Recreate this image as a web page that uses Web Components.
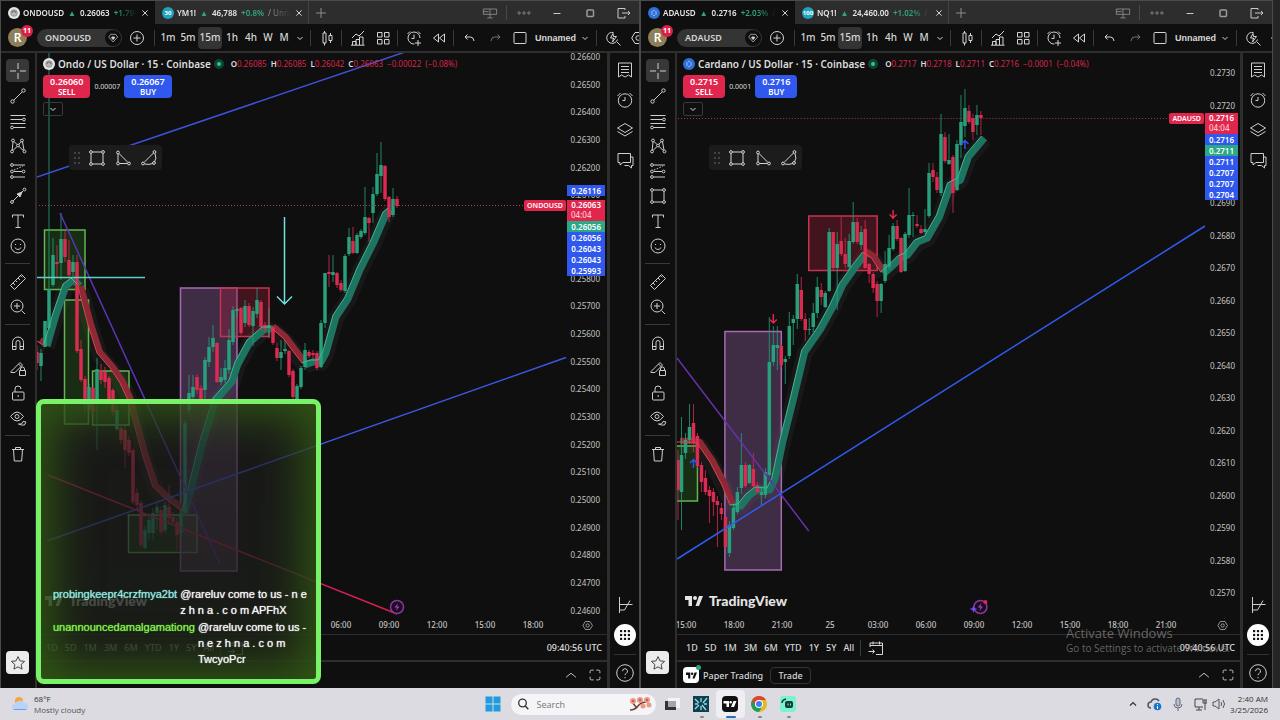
<!DOCTYPE html>
<html lang="en">
<head>
<meta charset="utf-8">
<title>Trading desktop</title>
<style>
  html, body { margin: 0; height: 100%; }
  body { background: #222; overflow: hidden; font-family: "Noto Sans", "Open Sans", sans-serif; }
</style>
</head>
<body>
<trading-desktop></trading-desktop>

<script>
const RESET = `
  *, *::before, *::after { box-sizing: border-box; }
  button, input { font: inherit; color: inherit; background: none; border: 0; padding: 0; margin: 0; }
  button { display: inline-flex; align-items: center; justify-content: center; white-space: nowrap; cursor: pointer; }
`;

/* Line icons, drawn on an 18 x 18 grid */
const dot = (x, y, r = 1.4) => `<circle cx="${x}" cy="${y}" r="${r}"/>`;
const ICONS = {
  cross: '<path d="M9 1v6M9 11v6M1 9h6M11 9h6"/>',
  line: `${dot(3.5, 14.5, 1.7)}${dot(14.5, 3.5, 1.7)}<path d="M4.8 13.2 13.2 4.8"/>`,
  fib: `<path d="M1.500 3.500h15M1.500 7.500h12M1.500 11.500h15M4.500 15.500h12"/>${dot(15, 7.5)}${dot(3, 15.5)}`,
  pattern: `${dot(4, 3.5)}${dot(13, 3.5)}${dot(3, 14.5)}${dot(15.500, 14.500)}${dot(9, 8.5)}<path d="M4 5 3.200 13M5 4.500 8 7.500M12 4.500 10 7.500M13.500 5 15 13M4 13.500 8 9.500M10 9.500 14.500 13.500"/>`,
  forecast: `${dot(3, 3)}${dot(3, 9.500)}${dot(14.500, 9.500)}${dot(3, 15)}<path d="M5 3h11M5 9.500h8M5 15h11"/><path d="M5 8 14 4" stroke-dasharray="1.500 1.500"/>`,
  arrow: `${dot(3, 15)}${dot(15.500, 2.500)}<path d="M4 14 14 4"/><path d="M13 5 11 10 8 7z" fill="currentColor"/>`,
  rect: `${dot(3, 3)}${dot(15, 3)}${dot(3, 15)}${dot(15, 15)}<path d="M4.500 3h9M4.500 15h9M3 4.500v9M15 4.500v9"/>`,
  text: '<path d="M3.500 5.500v-2.500h11v2.500M9 3v12.500M6.500 15.500h5"/>',
  smile: '<circle cx="9" cy="9" r="7"/><path d="M5.800 10.500q3.200 4 6.400 0M6.500 7v1M11.500 7v1"/>',
  ruler: '<path d="M1.500 12.500 12.500 1.500 16.500 5.500 5.500 16.500zM4 10l2 2M6.500 7.500l1.500 1.500M9 5l2 2M11.500 2.800 13 4.300"/>',
  zoom: '<circle cx="8" cy="8" r="6"/><path d="M8 5v6M5 8h6M12.500 12.500 16 16"/>',
  magnet: '<path d="M3.500 15.500V8.500a5.500 5.500 0 0 1 11 0v7h-3.500v-7a2 2 0 0 0-4 0v7zM3.500 12.500h3.500M11 12.500h3.500"/>',
  penlock: '<path d="M2 12.500 11 3.500l2.500 2.500-7.500 7.500H2zM9.500 5l2.500 2.500"/><rect x="10.500" y="11.500" width="6" height="5"/><path d="M11.500 11.500v-1.500a2 2 0 0 1 4 0v1.500"/>',
  lock: '<rect x="3.500" y="8" width="11.500" height="8" rx="1"/><path d="M6 8V5a3 3 0 0 1 6 0M9.200 11v2"/>',
  eye: '<path d="M1.500 7.500q6.500-9 13 0-6.500 9-13 0z"/><circle cx="8" cy="7.500" r="2"/><path d="M9.500 15h3l1.500-2.500 3 .5-1.500 3h-3z"/>',
  trash: '<path d="M3 4.500h12M6.500 4.500V2.500h5v2M4.500 4.500l.8 11.500h7.400l.8-11.500"/>',
  star: '<path d="M9 1.800l2.200 4.800 5.200.6-3.900 3.500 1.100 5.200L9 13.300l-4.600 2.600 1.100-5.200L1.600 7.200l5.200-.6z"/>',
  plus: '<circle cx="9" cy="9" r="6.500"/><path d="M9 5.500v7M5.500 9h7"/>',
  add: '<path d="M9 4v10M4 9h10"/>',
  close: '<path d="M6 6l6 6M12 6l-6 6"/>',
  chevron: '<path d="M6.500 8 9 10.500 11.500 8"/>',
  up: '<path d="M3.500 11.500 9 7l5.500 4.500"/>',
  candles: '<path d="M5 4v10h3V4zM6.500 2v2M6.500 14v2.500M11 6.500v5h3v-5zM12.500 4v2.500M12.500 11.500v2.500"/>',
  indicators: '<path d="M3 9 7 5l3 2 5-5M3.500 16v-3.500h3.500V16M7 16v-5.500h3.500V16M10.500 16V8h3.500v8M2 16.200h13.500"/>',
  grid: '<rect x="3.500" y="3.500" width="4.500" height="4.500"/><rect x="10.500" y="3.500" width="4.500" height="4.500"/><rect x="3.500" y="10.500" width="4.500" height="4.500"/><rect x="10.500" y="10.500" width="4.500" height="4.500"/>',
  alarmadd: '<path d="M15 9a6 6 0 1 0-5.500 6M9 5.500V9.500H6.500M2.500 5 5 2.500M13 2.500 15.500 5M13 11v6M10 14h6"/>',
  rewind: '<path d="M8.500 5 3.500 9l5 4zM14.500 5l-5 4 5 4z"/>',
  undo: '<path d="M6.500 5.500 4 8l2.500 2.500M4.500 8h5q3 0 3.500 4"/>',
  redo: '<path d="M11.500 5.500 14 8l-2.500 2.500M13.500 8h-5q-3 0-3.500 4" stroke-opacity=".5"/>',
  layout: '<rect x="3" y="3.500" width="12" height="11" rx="1"/>',
  search: '<path d="M13.500 10.500a5.500 5.500 0 1 1-4-7M13 13l3.500 3.500"/><path d="M9 4.500 6.500 9h3L8.500 13 12.500 7.500h-3z"/>',
  hex: '<path d="M6 3.500h6.500L15.800 9l-3.300 5.500H6L2.700 9z"/><circle cx="9.200" cy="9" r="2.300"/>',
  heart: '<path d="M5.500 3.500h7.500l3 4L9.200 15 2.500 7.500z"/><path d="M9.200 11.500 6.800 8.800q0-2.300 2.400-1.200 2.400-1.100 2.400 1.200z" fill="currentColor"/>',
  panes: '<rect x="1.500" y="4.500" width="15" height="6"/><path d="M9 4.500v10M6 14.500h6M1.500 7.500h6"/>',
  more: '<circle cx="3.500" cy="9" r="1.300"/><circle cx="9" cy="9" r="1.300"/><circle cx="14.500" cy="9" r="1.300"/>',
  min: '<path d="M5.500 9.500h7"/>',
  max: '<rect x="6" y="6" width="6.500" height="6.500" rx="1" stroke-width="1.500" stroke-opacity=".7"/>',
  exit: '<path d="M11 6V4.500H4v9.500H11V12M8 9h8M14 7 16 9 14 11"/>',
  news: '<path d="M2.500 2h13v14l-3-2-3.500 2-3.500-2-3 2zM5 5.500h8M5 8.500h8M5 11.500h8"/>',
  alarm: '<circle cx="9" cy="9.500" r="6.700"/><path d="M9 6v3.500H6.500M1.500 5l3-3M16.500 5l-3-3"/>',
  layers: '<path d="M9 2.500 16.500 7 9 11.500 1.500 7zM1.500 10.500 9 15l7.500-4.500"/>',
  chat: '<path d="M2 2.500h12.500v9H7L4 14v-2.500H2zM14.500 6H17v8.500h-1.500V17l-3-2.500H8.500"/>',
  tree: '<path d="M3.500 1v16M3.500 8.500h13M3.500 14h5L14 4.500"/>',
  dots9: [4, 9, 14].flatMap(y => [4, 9, 14].map(x => `<rect x="${x - 1.4}" y="${y - 1.4}" width="2.800" height="2.800" fill="currentColor" stroke="none"/>`)).join(''),
  help: '<circle cx="9" cy="9" r="8.300"/><path d="M6.500 7.200a2.500 2.500 0 1 1 3.700 2.200q-1.200.6-1.200 1.800M9 13v1.200"/>',
  calendar: '<path d="M3 8V4h12.500v11.500H9M3 6.500h12.500M6 2.500v3M12.500 2.500v3M1.500 12.500h6M5.500 10.500l2 2-2 2"/>',
  full: '<path d="M3.500 7V5q0-1.500 1.500-1.500h2.500M10.500 3.500H13q1.500 0 1.500 1.500v2M14.500 11v2q0 1.500-1.500 1.500h-2.500M7.500 14.500H5q-1.500 0-1.500-1.500v-2"/>',
  grip: [4, 9, 14].flatMap(y => [7, 11].map(x => `<circle cx="${x}" cy="${y}" r=".9" fill="currentColor" stroke="none"/>`)).join(''),
  angle: `${dot(4, 3.500)}${dot(4, 14.500)}${dot(15, 14.500)}<path d="M4 5v8M5.500 14.500h8M5 4.500 14 13.500"/>`,
  arc: `${dot(14.500, 3)}${dot(3, 14.500)}${dot(14, 14)}<path d="M13.500 4 4 13.500M4.500 15q4.500 1 8.500-.5M15 4.500q2 5-.5 8.500"/>`,
  tv: '<g fill="currentColor" stroke="none"><path d="M0 4h7v10H3.500V8H0z"/><circle cx="10" cy="6" r="2"/><path d="M10.500 14 14 4h4l-4 10z"/></g>'
};

class UiIcon extends HTMLElement {
  connectedCallback() {
    const name = this.getAttribute('name');
    this.attachShadow({ mode: 'open' }).innerHTML = `
      <style>
        :host { display: inline-block; flex: none; width: var(--icon, 18px); height: var(--icon, 18px); }
        svg { display: block; width: 100%; height: 100%; overflow: visible; fill: none; stroke: currentColor; stroke-width: 1; stroke-linejoin: round; }
      </style>
      <svg viewBox="0 0 18 18" aria-hidden="true">${ICONS[name] || ''}</svg>`;
  }
}
customElements.define('ui-icon', UiIcon);

/* Coin or index badge shown beside a symbol */
class CoinLogo extends HTMLElement {
  connectedCallback() {
    const kind = this.getAttribute('kind');
    const art = {
      ondo: '<circle cx="6" cy="6" r="6" fill="#e6e6e6"/><circle cx="6" cy="6" r="3.300" fill="#b5b5b5" stroke="#8a8a8a" stroke-width=".8"/><path d="M4 6a2 2 0 0 1 4 0" fill="none" stroke="#666"/>',
      ada: '<circle cx="6" cy="6" r="6" fill="#2f6fd6"/><g fill="#a9c8ff"><circle cx="6" cy="3.500" r=".8"/><circle cx="6" cy="8.500" r=".8"/><circle cx="4" cy="5" r=".8"/><circle cx="8" cy="5" r=".8"/><circle cx="4" cy="7" r=".8"/><circle cx="8" cy="7" r=".8"/></g>'
    }[kind] || '<circle cx="6" cy="6" r="6" fill="#1fa3bd"/>';
    this.attachShadow({ mode: 'open' }).innerHTML = `
      <style>
        :host { display: inline-grid; flex: none; width: 12px; height: 12px; place-items: center; color: #fff; font-size: 6px; line-height: 6px; font-weight: 700; }
        svg { grid-area: 1 / 1; width: 12px; height: 12px; display: block; }
        span { grid-area: 1 / 1; }
      </style>
      <svg viewBox="0 0 12 12" aria-hidden="true">${art}</svg><span><slot></slot></span>`;
  }
}
customElements.define('coin-logo', CoinLogo);

/* Each candle: x, colour, body top, body bottom, wick top, wick bottom */
const CHARTS = {
  ondo: {
    box: '37 53 530 563',
    candles: `37r 352 363 345 370;41g 353 366 349 381;45g 321 347 321 347;49g 289 328 53 330;53g 255 285 238 287;57r 262 264 245 277;61g 239 263 213 280;65r 239 257 230 262;69r 260 275 240 277;73g 262 272 255 276;77r 262 351 255 353;81r 349 380 340 382;85r 379 405 376 412;89g 387 410 384 414;93r 388 412 386 420;97g 369 402 358 450;101r 370 380 364 384;105r 372 382 367 388;109r 378 402 376 404;113r 390 412 388 416;117g 410 429 400 431;121r 428 440 424 444;125r 430 450 426 468;129r 440 453 436 456;133r 450 502 448 504;137r 493 505 488 510;141r 503 545 500 548;145g 530 548 526 550;149g 520 533 514 540;153g 513 533 508 540;157g 507 513 502 530;161r 510 532 506 535;165g 505 530 502 533;169r 507 518 485 524;173r 517 522 512 526;177r 522 535 518 550;181g 513 533 510 536;185g 423 513 420 514;189g 393 410 375 414;193g 387 397 375 400;197r 377 390 374 394;201r 388 402 385 404;205g 360 390 357 402;209g 347 362 337 367;213g 338 347 325 352;217r 343 382 342 383;221g 377 382 368 385;225g 368 380 360 383;229g 340 370 329 374;233g 310 342 306 345;237g 309 311 307 318;241r 308 333 307 335;245g 306 323 300 327;249r 306 325 303 327;253g 311 326 307 346;257g 300 314 288 318;261r 302 327 300 330;265r 325 329 322 332;269g 325 328 308 338;273r 327 343 326 345;277r 348 358 343 361;281g 352 358 340 370;285g 349 351 340 354;289r 351 375 350 377;293r 371 397 369 402;297g 386 400 384 404;301g 368 387 366 389;305g 350 367 343 370;309r 352 356 350 358;313r 353 355 350 360;317r 353 368 351 370;321g 323 367 320 368;325g 273 323 273 328;329r 272 274 255 287;333g 272 275 255 282;337r 273 285 272 288;341r 283 290 280 292;345g 256 291 254 293;349g 237 254 228 256;353r 241 253 227 254;357g 235 253 233 254;361g 231 237 229 239;365g 217 233 187 235;369r 218 223 217 242;373g 194 213 187 223;377g 174 194 153 196;381g 165 176 142 193;385r 166 199 165 201;389r 197 217 196 222;393g 199 215 188 217;397r 199 206 196 208`,
    ribbons: [
      ['r', '37,341 43,345'],
      ['g', '44,344 53,313 63,284 71,278 77,284'],
      ['r', '78,287 88,325 97,353 110,368 120,383 127,398 133,420 143,457 153,487 167,500 182,511'],
      ['g', '182,511 190,480 200,440 213,398 229,380 235,362 247,340 262,327 270,327'],
      ['r', '270,327 283,338 292,350 302,363'],
      ['g', '302,363 310,360 318,360 323,351 333,315 345,297 357,268 370,242 383,212 388,208']
    ],
    boxes: [
      [44.5, 230, 40.5, 59.5, 'lime'], [64.5, 300, 24, 124, 'lime'], [92.5, 371, 36.5, 54, 'lime'], [128.5, 515, 68.5, 37.5, 'lime'],
      [180.5, 288, 56.5, 283, 'violet'], [220.5, 288, 48.5, 48.5, 'rose']
    ],
    lines: [
      [37, 177, 405, 52, '#3f51d8'], [47, 541, 566, 357.5, '#3b56e0'], [48, 475, 397, 614, '#d32150'],
      [60, 213, 220, 564, '#5a35b8'], [37, 277.5, 145, 277.5, '#62cfc4']
    ],
    extra: '<path d="M284.5 217v87M277 296.500l7.500 7.500 7.500-7.500" stroke="#6fe0dc" stroke-width="1.500" fill="none"/>',
    last: 205.5, event: [397, 607]
  },
  ada: {
    box: '677 53 529 563',
    candles: `678r 460 490 450 520;681.5g 455 492 417 530;685.5g 440 453 433 459;689.5g 427 440 404 444;693.5r 423 442 404 452;697.5r 436 466 433 468;701.5r 465 482 462 492;705.5r 478 492 470 495;709.5r 490 496 486 523;713.5r 492 502 488 516;717.5r 501 505 496 547;721.5r 508 514 503 520;725.5r 517 547 515 549;729.5g 525 553 521 557;733.5g 508 528 505 530;737.5g 492 512 487 514;741.5g 465 488 433 494;745.5r 465 486 462 488;749.5g 465 483 464 484;753.5r 469 486 453 489;757.5r 485 492 482 494;761.5g 492 495 488 505;765.5g 472 495 468 498;769.5g 362 475 317 477;773.5g 345 362 326 366;777.5g 345 348 326 370;781.5r 346 365 344 368;785.5g 359 362 356 384;789.5g 326 356 312 359;793.5g 319 323 315 345;797.5g 284 319 274 329;801.5r 290 319 277 321;805.5r 319 330 313 341;809.5g 329 330 318 335;813.5g 313 327 303 332;817.5g 287 313 277 318;821.5r 290 297 283 305;825.5g 293 307 291 308;829.5g 232 291 228 292;833.5r 232 268 232 270;837.5g 244 268 232 310;841.5r 241 254 217 256;845.5r 254 264 238 268;849.5g 241 267 234 271;853.5g 222 242 202 244;857.5r 222 242 218 244;861.5g 232 245 226 250;865.5r 229 268 220 269;869.5r 264 274 263 283;873.5r 274 288 272 293;877.5r 284 301 281 317;881.5g 284 301 283 313;885.5g 264 281 251 283;889.5g 248 267 235 270;893.5g 226 249 223 251;897.5r 226 239 220 241;901.5r 238 272 237 273;905.5g 234 271 232 272;909.5g 215 235 188 238;913.5g 215 216 212 237;917.5r 224 226 215 228;921.5r 229 233 225 234;925.5g 229 232 209 234;929.5g 173 216 163 218;933.5r 170 177 163 182;937.5r 177 190 172 193;941.5g 134 193 114 196;945.5r 137 161 132 163;949.5g 160 164 134 165;953.5r 157 193 155 213;957.5g 144 190 140 191;961.5g 122 145 95 158;965.5g 108 126 89 137;969.5r 111 122 105 124;973.5r 118 132 114 140;977.5g 115 125 105 135;981.5r 115 118 111 135`,
    ribbons: [
      ['r', '677,442 690,442 697,443 710,462 722,485 730,505'],
      ['g', '730,505 738,504 746,494 755,487 767,488 772,478 780,440 790,400 802,350 818,327 830,305 840,283 855,262 863,252'],
      ['r', '863,252 872,258 881,272'],
      ['g', '881,272 892,262 898,256 905,253 915,240 925,236 937,215 948,183 958,178 966,155 982,136']
    ],
    boxes: [[660, 446, 37.5, 55, 'lime'], [725, 331.5, 56.5, 238.5, 'violet'], [809, 216, 68.5, 54.5, 'rose']],
    lines: [[677, 358, 809, 531, '#6a2fb0'], [677, 559, 1206, 226, '#2f5cf0']],
    extra: `<g fill="none" stroke-width="1.500"><path d="M773.500 314v9M770 319.500l3.500 3.500 3.500-3.500M893.500 210v9M890 214.500l3.500 3.500 3.500-3.500" stroke="#e0264d"/><path d="M965.500 149v-8M962 144l3.500-3.500 3.500 3.500M693.500 468v-8M690 463l3.500-3.500 3.500 3.500" stroke="#2f55f0"/></g>`,
    last: 118.5, event: [981, 607]
  }
};

class PricePlot extends HTMLElement {
  connectedCallback() {
    const key = this.getAttribute('series');
    const c = CHARTS[key];
    const candles = c.candles.split(';').map(s => {
      const [id, bt, bb, wt, wb] = s.trim().split(' ');
      const x = parseFloat(id), col = id.endsWith('g') ? '#26a17b' : '#dc2a50';
      return `<path d="M${x} ${wt}V${wb}" stroke="${col}" stroke-opacity=".8"/><rect x="${x - 1.75}" y="${bt}" width="3.500" height="${Math.max(1, bb - bt)}" fill="${col}"/>`;
    }).join('');
    const haze = c.ribbons.map(([, p]) => `<polyline points="${p}" stroke="#191818" stroke-width="16" transform="translate(3 3)"/>`).join('');
    const band = c.ribbons.map(([k, p]) => k === 'g'
      ? `<polyline points="${p}" stroke="#1d7460" stroke-width="7" transform="translate(3 2)"/>`
      : `<polyline points="${p}" stroke="#8e2835" stroke-width="6" transform="translate(3 -1)"/>`).join('');
    const edge = c.ribbons.map(([k, p]) => `<polyline points="${p}" stroke="${k === 'g' ? '#45b795' : '#d2484f'}"/>`).join('');
    const tint = { lime: ['#63b552', '#2a6a1e55'], violet: ['#a868b4', '#7a508873'], rose: ['#c8334f', '#a0203c59'] };
    const boxes = c.boxes.map(([x, y, w, h, t]) => `<rect x="${x}" y="${y}" width="${w}" height="${h}" stroke="${tint[t][0]}" stroke-width="1.500" fill="${tint[t][1]}"/>`).join('');
    const lines = c.lines.map(([x1, y1, x2, y2, s]) => `<path d="M${x1} ${y1}L${x2} ${y2}" stroke="${s}" stroke-width="1.500"/>`).join('');
    const [ex, ey] = c.event;
    const spark = key === 'ada' ? `<path d="M${ex - 7} ${ey - 2}l1 3 3 1-3 1-1 3-1-3-3-1 3-1z" fill="#6d4df0"/><circle cx="${ex + 5}" cy="${ey - 5}" r="2" fill="#e0264d"/>` : '';
    this.attachShadow({ mode: 'open' }).innerHTML = `
      <style>:host { display: block; min-width: 0; } svg { display: block; width: 100%; height: 100%; }</style>
      <svg viewBox="${c.box}" preserveAspectRatio="none" role="img" aria-label="Price chart">
        <g fill="none" stroke-linejoin="round">${haze}</g>
        ${boxes}
        <g fill="none" stroke-linejoin="round">${band}</g>
        ${candles}
        <g fill="none" stroke-linejoin="round">${edge}</g>
        ${lines}${c.extra}
        <path d="M0 ${c.last}H1300" stroke="#a83a52" stroke-dasharray="1 2"/>
        <circle cx="${ex}" cy="${ey}" r="6.500" fill="#1a0d20" stroke="#8a35a0" stroke-width="1.500"/>
        <path d="M${ex + 1} ${ey - 4}l-3.500 4.500h2.500l-1 3.500 3.500-4.500h-2.500z" fill="#a544bb"/>${spark}
      </svg>`;
  }
}
customElements.define('price-plot', PricePlot);

/* Price scale with evenly spaced labels and the stack of current values */
class PriceScale extends HTMLElement {
  set data(d) {
    this.attachShadow({ mode: 'open' }).innerHTML = `
      <style>${RESET}
        :host { display: flex; flex: none; position: relative; width: var(--scale); font-size: 8px; line-height: 11px; color: #c4c4c4; }
        ol { flex: 1; list-style: none; margin: var(--start) 0 var(--end) 0; padding: 0 var(--inset) 0 0; display: flex; flex-direction: column; justify-content: space-between; align-items: flex-end; }
        li { height: 11px; }
        .tags { position: absolute; left: 0; right: 2px; top: var(--tag-top); color: #fff; font-weight: 600; }
        .tags div, .alone { padding-right: 4px; text-align: right; background: #3058ee; height: 11px; }
        .tags .last { background: #e0264d; height: 21px; line-height: 10px; }
        .tags .last span { display: block; text-align: left; padding-left: 4px; font-weight: 500; color: #ffc9d2; }
        .tags .mint { background: #2ba886; }
        .alone { position: absolute; left: 0; right: 2px; top: 132px; color: #fff; font-weight: 600; }
        .name { position: absolute; right: 100%; top: var(--tag-top); margin-right: 1px; padding: 0 3px; background: #e0264d; color: #fff; font-size: 7px; font-weight: 600; border-radius: 2px; }
      </style>
      <ol>${d.labels.map(l => `<li>${l}</li>`).join('')}</ol>
      ${d.alone ? `<div class="alone">${d.alone}</div>` : ''}
      <span class="name">${d.symbol}</span>
      <div class="tags"><div class="last">${d.price}<span>04:04</span></div>${d.tags.map((t, i) => `<div class="${i === d.mint ? 'mint' : ''}">${t}</div>`).join('')}</div>`;
  }
}
customElements.define('price-scale', PriceScale);

class ToolRail extends HTMLElement {
  connectedCallback() {
    const sixth = this.getAttribute('sixth');
    const groups = [['cross', 'line', 'fib', 'pattern', 'forecast', sixth, 'text', 'smile'], ['ruler', 'zoom'], ['magnet', 'penlock', 'lock', 'eye'], ['trash']];
    this.attachShadow({ mode: 'open' }).innerHTML = `
      <style>${RESET}
        :host { display: flex; flex-direction: column; align-items: center; padding: 5px 1px 14px 0; color: #cfcfcf; }
        button { width: 23px; height: 25px; }
        .on { background: #383838; border-radius: 4px; height: 23px; margin: 1px 0; }
        hr { width: 25px; height: 1px; border: 0; background: #3a3a3a; margin: 5px 0; }
        .fav { margin-top: auto; height: 23px; background: #ececec; color: #333; border-radius: 4px; --icon: 16px; }
      </style>
      ${groups.map(g => g.map(n => `<button class="${n === 'cross' ? 'on' : ''}" aria-label="${n}"><ui-icon name="${n}"></ui-icon></button>`).join('')).join('<hr>')}
      <button class="fav" aria-label="Favourites"><ui-icon name="star"></ui-icon></button>`;
  }
}
customElements.define('tool-rail', ToolRail);

class WidgetRail extends HTMLElement {
  connectedCallback() {
    this.attachShadow({ mode: 'open' }).innerHTML = `
      <style>${RESET}
        :host { display: flex; flex-direction: column; align-items: center; padding: 2px 0 0; color: #cfcfcf; }
        button { width: 28px; height: 30px; }
        .gap { flex: 1; }
        .apps { width: 22px; height: 22px; margin: 4px 0; border-radius: 50%; background: #fff; color: #111; --icon: 14px; }
        hr { width: 22px; height: 1px; border: 0; background: #333; margin: 4px 0 3px; }
      </style>
      ${['news', 'alarm', 'layers', 'chat'].map(n => `<button aria-label="${n}"><ui-icon name="${n}"></ui-icon></button>`).join('')}
      <span class="gap"></span>
      <button aria-label="Object tree"><ui-icon name="tree"></ui-icon></button>
      <button class="apps" aria-label="Apps"><ui-icon name="dots9"></ui-icon></button>
      <hr>
      <button aria-label="Help"><ui-icon name="help"></ui-icon></button>`;
  }
}
customElements.define('widget-rail', WidgetRail);

class TabStrip extends HTMLElement {
  set data(tabs) {
    this.attachShadow({ mode: 'open' }).innerHTML = `
      <style>${RESET}
        :host { display: flex; flex: none; height: 23px; background: #2d2d2d; color: #e6e6e6; font-size: 8px; line-height: 12px; font-weight: 600; }
        .tab { width: 154px; display: flex; align-items: center; padding: 0 1px 0 7px; border-right: 1px solid #444; flex: none; }
        .tab.on { background: #0f0f0f; border-color: #0f0f0f; }
        .copy { flex: 1; min-width: 0; overflow: hidden; gap: 4px; padding-left: 3px; justify-content: flex-start; -webkit-mask-image: linear-gradient(90deg, #000 82%, transparent); mask-image: linear-gradient(90deg, #000 82%, transparent); }
        .copy i { font-style: normal; color: #2fa77c; }
        .copy i:first-of-type { width: 8px; text-align: center; }
        .copy em { font-style: normal; color: #999; font-weight: 400; }
        .x { width: 16px; height: 23px; --icon: 16px; }
        .btn { width: 33px; color: #c9c9c9; }
        .add { width: 24px; color: #8c8c8c; }
        .dim { color: #8c8c8c; --icon: 16px; }
        .sep { width: 1px; background: #484848; margin: 4px 0; }
        .gap { flex: 1; }
      </style>
      ${tabs.map((t, i) => `<div class="tab ${i ? '' : 'on'}"><coin-logo kind="${t.kind}">${t.badge || ''}</coin-logo><button class="copy"><span>${t.name}</span><i>▲</i><span>${t.price}</span><i>${t.change}</i><em>${t.tail}</em></button><button class="x" aria-label="Close tab"><ui-icon name="close"></ui-icon></button></div>`).join('')}
      <button class="add" aria-label="New tab"><ui-icon name="add"></ui-icon></button>
      <span class="gap"></span>
      <button class="btn dim" aria-label="Arrange windows"><ui-icon name="panes"></ui-icon></button><span class="sep"></span>
      ${['more', 'min', 'max', 'exit'].map(n => `<button class="btn ${n === 'more' ? 'dim' : ''}" aria-label="${n}"><ui-icon name="${n}"></ui-icon></button>`).join('')}`;
  }
}
customElements.define('tab-strip', TabStrip);

class ChartToolbar extends HTMLElement {
  connectedCallback() {
    const b = n => `<button class="ic" aria-label="${n}"><ui-icon name="${n}"></ui-icon></button>`;
    this.attachShadow({ mode: 'open' }).innerHTML = `
      <style>${RESET}
        :host { display: flex; flex: none; align-items: center; height: 27px; overflow: hidden; background: #0f0f0f; color: #d6d6d6; font-size: 10px; line-height: 13px; font-weight: 500; }
        button, span { flex: none; }
        .user { position: relative; width: 36px; height: 27px; padding-left: 7px; justify-content: flex-start; }
        .user b { width: 19px; height: 19px; border-radius: 50%; background: #8f7f58; color: #fff; font-size: 12px; line-height: 19px; font-weight: 600; }
        .user small { position: absolute; left: 20px; top: 1px; width: 12px; height: 12px; border-radius: 50%; background: #dd1f48; color: #fff; font-size: 7px; line-height: 12px; font-weight: 700; }
        .symbol { width: 85px; height: 18px; border-radius: 9px; background: #343434; padding: 0 1px 0 8px; justify-content: space-between; font-size: 9px; font-weight: 600; }
        .symbol span:last-child { width: 16px; height: 16px; border-radius: 50%; background: #0f0f0f; display: grid; place-items: center; --icon: 12px; }
        .plus { width: 30px; }
        .sep { width: 1px; height: 16px; background: #3a3a3a; margin: 0 3px 0 2px; }
        .t { width: 20px; height: 22px; }
        .t.h { width: 18px; } .t.w { width: 16px; } .t.c { width: 16px; }
        .t.on { width: 24px; background: #343434; border-radius: 4px; }
        .ic { width: 25px; height: 25px; }
        .layout { width: 62px; height: 22px; padding: 0 0 0 3px; justify-content: space-between; font: 700 9px/12px "Liberation Sans", sans-serif; }
      </style>
      <button class="user" aria-label="Account"><b>R</b><small>11</small></button>
      <button class="symbol"><span>${this.getAttribute('symbol')}</span><span><ui-icon name="heart"></ui-icon></span></button>
      <button class="plus" aria-label="Compare"><ui-icon name="plus"></ui-icon></button>
      <span class="sep"></span>
      <button class="t">1m</button><button class="t">5m</button><button class="t on">15m</button><button class="t">1h</button><button class="t h">4h</button><button class="t w">W</button><button class="t w">M</button><button class="t c" aria-label="More intervals"><ui-icon name="chevron"></ui-icon></button>
      <span class="sep"></span>${b('candles')}<span class="sep"></span>${b('indicators')}${b('grid')}
      <span class="sep"></span>${b('alarmadd')}${b('rewind')}<span class="sep"></span>${b('undo')}${b('redo')}${b('layout')}
      <button class="layout"><span>Unnamed</span><ui-icon name="chevron"></ui-icon></button>
      <span class="sep"></span>${b('search')}${b('hex')}`;
  }
}
customElements.define('chart-toolbar', ChartToolbar);

class ChartLegend extends HTMLElement {
  set data(d) {
    this.attachShadow({ mode: 'open' }).innerHTML = `
      <style>${RESET}
        :host { display: flex; flex-direction: column; align-items: flex-start; gap: 4px; color: #dedede; }
        .title { display: flex; align-items: center; height: 14px; white-space: nowrap; }
        h2 { margin: 0 3px; font-size: 10px; line-height: 14px; font-weight: 600; }
        .live { width: 10px; height: 10px; border-radius: 50%; background: #35c48f; border: 3px solid #0c4634; margin-right: 7px; }
        dl { display: flex; gap: 4px; margin: 0; font-size: 8px; line-height: 12px; }
        dl div { display: flex; } dt { font-weight: 600; } dd { margin: 0; color: #d42549; }
        .trade { display: flex; align-items: center; gap: 4px; font-size: 7px; line-height: 9px; }
        .trade button { flex-direction: column; height: 23px; padding: 0 7px; border-radius: 4px; font-size: 8px; line-height: 10px; font-weight: 600; color: #fff; background: #3058ee; }
        .trade button b { font-size: 9px; font-weight: 600; }
        .trade .sell { background: #e0264d; }
        .fold { width: 20px; height: 14px; border: 1px solid #3a3a3a; border-radius: 2px; }
      </style>
      <div class="title"><coin-logo kind="${d.kind}"></coin-logo><h2>${d.title}</h2><span class="live"></span>
        <dl>${d.ohlc.map(([k, v]) => `<div><dt>${k}</dt><dd>${v}</dd></div>`).join('')}<div><dd>${d.delta}</dd></div><div><dd>${d.pct}</dd></div></dl></div>
      <div class="trade"><button class="sell"><b>${d.sell}</b><span>SELL</span></button><span>${d.spread}</span><button><b>${d.buy}</b><span>BUY</span></button></div>
      <button class="fold" aria-label="Collapse"><ui-icon name="chevron"></ui-icon></button>`;
  }
}
customElements.define('chart-legend', ChartLegend);

class TradingWindow extends HTMLElement {
  connectedCallback() {
    const d = WINDOWS[this.getAttribute('model')];
    const root = this.attachShadow({ mode: 'open' });
    root.innerHTML = `
      <style>${RESET}
        :host { display: flex; flex-direction: column; min-width: 0; overflow: hidden; background: #0f0f0f; border: 1px solid #4a4a4a; border-bottom: 0; color: #d6d6d6; --line: #2e2e2e; }
        .body { flex: 1; min-height: 0; display: flex; border-top: 2px solid var(--line); }
        tool-rail { width: 34px; }
        widget-rail { width: 29px; }
        .chart { flex: 1; min-width: 0; display: flex; flex-direction: column; border: solid var(--line); border-width: 0 3px 0 2px; }
        .stage { flex: 1; min-height: 0; display: flex; overflow: hidden; }
        .canvas { flex: 1; min-width: 0; position: relative; display: flex; }
        price-plot { flex: 1; }
        chart-legend { position: absolute; left: 6px; top: 4px; }
        .shapes { position: absolute; left: 32px; top: 92px; height: 25px; display: flex; align-items: center; background: #1c1c1c; border-radius: 4px; }
        .shapes button { width: 26px; height: 25px; }
        .shapes button:first-child { width: 15px; color: #555; }
        .brand { position: absolute; left: 8px; bottom: 6px; display: flex; align-items: center; gap: 6px; font: 900 14px/18px Lato, sans-serif; color: #e4e4e4; }
        .time { height: 18px; display: flex; font-size: 8px; line-height: 17px; color: #c4c4c4; font-weight: 500; }
        .ticks { flex: 1; min-width: 0; overflow: hidden; display: flex; justify-content: flex-end; padding-right: var(--tick-end); }
        .ticks span { flex: none; width: 48px; text-align: center; }
        .cog { width: var(--scale); --icon: 13px; height: 18px; }
        .ranges { height: 26px; border-top: 1px solid var(--line); display: flex; align-items: center; gap: 1px; padding: 0 5px 0 6px; font-size: 9px; font-weight: 500; }
        .ranges button { padding: 0 3px; height: 20px; }
        .ranges i { width: 1px; height: 16px; background: #3a3a3a; margin: 0 2px; }
        .ranges time { margin-left: auto; color: #dedede; }
        .dock { height: 28px; border-top: 2px solid var(--line); display: flex; align-items: center; padding: 0 0 0 6px; font-size: 9px; font-weight: 500; }
        .dock .paper { gap: 4px; }
        .mark { position: relative; width: 16px; height: 16px; border-radius: 4px; background: #fff; color: #111; display: grid; place-items: center; --icon: 11px; }
        .mark::after { content: ""; position: absolute; right: -2px; top: -2px; width: 5px; height: 5px; border-radius: 50%; background: #2aa57e; }
        .dock .trade { margin-left: 7px; width: 41px; height: 17px; border: 1px solid #333; border-radius: 4px; }
        .dock .end { margin-left: auto; }
        .dock .tool { width: 24px; height: 24px; --icon: 16px; }
      </style>
      <tab-strip></tab-strip>
      <chart-toolbar symbol="${d.symbol}"></chart-toolbar>
      <div class="body">
        <tool-rail sixth="${d.sixth}"></tool-rail>
        <main class="chart" style="--scale:${d.scale};--tick-end:${d.tickEnd};--start:${d.start};--end:${d.end};--inset:${d.inset};--tag-top:${d.tagTop}">
          <div class="stage">
            <div class="canvas">
              <price-plot series="${d.series}"></price-plot>
              <chart-legend></chart-legend>
              <div class="shapes">${['grip', 'rect', 'angle', 'arc'].map(n => `<button aria-label="${n}"><ui-icon name="${n}"></ui-icon></button>`).join('')}</div>
              <div class="brand"><ui-icon name="tv"></ui-icon><span>TradingView</span></div>
            </div>
            <price-scale></price-scale>
          </div>
          <div class="time"><div class="ticks">${d.times.map(t => `<span>${t}</span>`).join('')}</div><button class="cog" aria-label="Scale settings"><ui-icon name="hex"></ui-icon></button></div>
          <div class="ranges">${['1D', '5D', '1M', '3M', '6M', 'YTD', '1Y', '5Y', 'All'].map(r => `<button>${r}</button>`).join('')}<i></i><button aria-label="Go to date"><ui-icon name="calendar"></ui-icon></button><time>09:40:56 UTC</time></div>
          <div class="dock">${d.dock ? '<button class="paper"><span class="mark"><ui-icon name="tv"></ui-icon></span>Paper Trading</button><button class="trade">Trade</button>' : ''}<button class="tool end" aria-label="Open panel"><ui-icon name="up"></ui-icon></button><button class="tool" aria-label="Maximise panel"><ui-icon name="full"></ui-icon></button></div>
        </main>
        <widget-rail></widget-rail>
      </div>`;
    root.querySelector('tab-strip').data = d.tabs;
    root.querySelector('price-scale').data = d.prices;
    root.querySelector('chart-legend').data = d.legend;
  }
}

const range = (from, step, n, digits, hide) => Array.from({ length: n }, (_, i) => hide.includes(i) ? '' : (from - step * i).toFixed(digits));
const WINDOWS = {
  left: {
    symbol: 'ONDOUSD', series: 'ondo', sixth: 'arrow', scale: '40px', tickEnd: '10px', start: '-2px', end: '0px', inset: '7px', tagTop: '147px', dock: false,
    tabs: [{ kind: 'ondo', name: 'ONDOUSD', price: '0.26063', change: '+1.79%', tail: '' }, { kind: 'index', badge: '30', name: 'YM1!', price: '46,788', change: '+0.8%', tail: '/ Unnamed' }],
    prices: { labels: range(0.266, 0.001, 21, 5, [6, 7]), symbol: 'ONDOUSD', price: '0.26063', alone: '0.26116', tags: ['0.26056', '0.26056', '0.26043', '0.26043', '0.25993'], mint: 0 },
    legend: { kind: 'ondo', title: 'Ondo / US Dollar · 15 · Coinbase', ohlc: [['O', '0.26085'], ['H', '0.26085'], ['L', '0.26042'], ['C', '0.26063']], delta: '−0.00022', pct: '(−0.08%)', sell: '0.26060', spread: '0.00007', buy: '0.26067' },
    times: ['06:00', '09:00', '12:00', '15:00', '18:00']
  },
  right: {
    symbol: 'ADAUSD', series: 'ada', sixth: 'rect', scale: '35px', tickEnd: '15px', start: '14px', end: '18px', inset: '5px', tagTop: '60px', dock: true,
    tabs: [{ kind: 'ada', name: 'ADAUSD', price: '0.2716', change: '+2.03%', tail: '/ U' }, { kind: 'index', badge: '100', name: 'NQ1!', price: '24,460.00', change: '+1.02%', tail: '/' }],
    prices: { labels: range(0.273, 0.001, 17, 4, [2, 3]), symbol: 'ADAUSD', price: '0.2716', tags: ['0.2716', '0.2711', '0.2711', '0.2707', '0.2707', '0.2704'], mint: 1 },
    legend: { kind: 'ada', title: 'Cardano / US Dollar · 15 · Coinbase', ohlc: [['O', '0.2717'], ['H', '0.2718'], ['L', '0.2711'], ['C', '0.2716']], delta: '−0.0001', pct: '(−0.04%)', sell: '0.2715', spread: '0.0001', buy: '0.2716' },
    times: ['15:00', '18:00', '21:00', '25', '03:00', '06:00', '09:00', '12:00', '15:00', '18:00', '21:00']
  }
};

class StreamChat extends HTMLElement {
  connectedCallback() {
    this.attachShadow({ mode: 'open' }).innerHTML = `
      <style>${RESET}
        :host { display: flex; flex-direction: column; justify-content: flex-end; gap: 1px; padding: 12px 6px 12px 12px; border: 5px solid #78f266; border-radius: 8px;
          background: linear-gradient(#1f1d1f99, #1b1f18d9); box-shadow: inset 0 0 45px 12px #3a7012b3;
          font: 11px/16px "Liberation Sans", sans-serif; color: #f4f4f4; text-shadow: 0 0 1px currentColor; }
        p { margin: 0; display: flex; gap: 3px; }
        b { font-weight: 400; color: #8fe6dc; } p + p b { color: #7ff04a; }
      </style>
      <p><b>probingkeepr4crzfmya2bt</b><span>@rareluv come to us - n e z h n a . c o m APFhX</span></p>
      <p><b>unannouncedamalgamationg</b><span>@rareluv come to us - n e z h n a . c o m TwcyoPcr</span></p>`;
  }
}
customElements.define('stream-chat', StreamChat);

class TaskBar extends HTMLElement {
  connectedCallback() {
    const svg = (body, w = 18) => `<svg width="${w}" height="18" viewBox="0 0 ${w} 18" aria-hidden="true">${body}</svg>`;
    this.attachShadow({ mode: 'open' }).innerHTML = `
      <style>${RESET}
        :host { display: grid; grid-template-columns: 1fr auto 1fr; align-items: center; height: 32px; background: #dcdbe1; color: #333; font: 8px/11px "Open Sans", sans-serif; }
        svg { display: block; }
        .weather { justify-self: start; gap: 5px; padding-left: 11px; text-align: left; }
        .weather span { display: block; } .weather span + span { color: #555; }
        .apps { display: flex; align-items: center; padding-right: 1px; }
        .app { position: relative; width: 29px; height: 28px; border-radius: 4px; }
        .app.run::after { content: ""; position: absolute; bottom: 0; left: 13px; width: 4px; height: 2px; border-radius: 1px; background: #888; }
        .app.on { background: #efeef2; } .app.on::after { left: 10px; width: 10px; background: #2a6fb8; }
        .start { width: 32px; }
        label { display: flex; align-items: center; gap: 5px; width: 145px; height: 21px; margin: 0 2px; padding: 0 3px; border-radius: 11px; background: #f5f4f7; }
        input { flex: 1; min-width: 0; outline: 0; font-size: 9px; } input::placeholder { color: #777; opacity: 1; }
        .tray { justify-self: end; display: flex; align-items: center; gap: 4px; padding-right: 12px; }
        .clock { text-align: right; }
      </style>
      <button class="weather">${svg('<circle cx="8" cy="6" r="4" fill="#f3a63b"/><path d="M4 15a3 3 0 0 1 0-6 5 5 0 0 1 9-1 3.500 3.500 0 0 1 1 7z" fill="#b9d3f5"/><path d="M4 15a3 3 0 0 1-2-1h14q-1 1-2 1z" fill="#6f9ee8"/>')}<span><span>68°F</span><span>Mostly cloudy</span></span></button>
      <div class="apps">
        <button class="app start" aria-label="Start">${svg('<path d="M1.500 1.500h7v7h-7zM9.500 1.500h7v7h-7zM1.500 9.500h7v7h-7zM9.500 9.500h7v7h-7z" fill="#1f9be0"/>')}</button>
        <label>${svg('<circle cx="8.500" cy="8" r="3.800" fill="none" stroke="#333" stroke-width="1.300"/><path d="M11.300 11l3 3.200" stroke="#333" stroke-width="1.400"/>')}<input type="search" placeholder="Search" aria-label="Search">${svg('<path d="M2 15q5 0 8-4t9-4M8 12 4 7M13 9l-1-4" fill="none" stroke="#6e3e35" stroke-width="1.500"/><g fill="#e89a86"><circle cx="5" cy="6" r="3"/><circle cx="12" cy="5" r="3"/><circle cx="19" cy="5" r="3"/><circle cx="21" cy="10" r="2.500"/><circle cx="15" cy="11" r="2.500"/></g><g fill="#c2493f"><circle cx="5" cy="6" r="1"/><circle cx="12" cy="5" r="1"/><circle cx="19" cy="5" r="1"/></g>', 25)}</label>
        <button class="app" aria-label="Task view">${svg('<path d="M5 3h12v10H5z" fill="#f4f4f6"/><path d="M2 6h11v9H2z" fill="#333"/><path d="M5 6h8v6H5z" fill="#a5a5aa"/>')}</button>
        <button class="app run" aria-label="Desktop app">${svg('<path d="M1 1h16v16H1z" fill="#123f50"/><path d="M3 4l4 4M15 3l-4 5M3 14l4-4M14 15l-4-5M9 3v4M9 11v4M3 9h3M12 9h3" stroke="#8fe0e0" stroke-width="1.300"/>')}</button>
        <button class="app run on" aria-label="TradingView">${svg('<rect x="1" y="1" width="16" height="16" rx="4" fill="#111"/><path d="M2.500 6H8v6H5.500V8.500h-3z" fill="#fff"/><circle cx="9.700" cy="7.200" r="1.200" fill="#fff"/><path d="M10 12l2.500-6h3L13 12z" fill="#fff"/>')}</button>
        <button class="app run" aria-label="Chrome">${svg('<circle cx="9" cy="9" r="8" fill="#e8b820"/><path d="M2.100 5A8 8 0 0 1 15.900 5H9z" fill="#db4437"/><path d="M2.100 5A8 8 0 0 0 9 17l3.500-6L9 9z" fill="#1f9d58"/><path d="M2.100 5h6.900v4L5.500 11z" fill="#db4437"/><circle cx="9" cy="9" r="4" fill="#fff"/><circle cx="9" cy="9" r="3" fill="#3d7ff0"/>')}</button>
        <button class="app run" aria-label="Streaming app">${svg('<rect x="1" y="1" width="16" height="16" rx="3" fill="#7df2d0"/><rect x="6" y="6" width="8" height="7" rx="2" fill="#123c35"/><path d="M9 8.500v2M11.500 8.500v2" stroke="#7df2d0"/><path d="M3 8q0-3 4-4" fill="none" stroke="#123c35" stroke-width="1.500"/>')}</button>
      </div>
      <div class="tray">
        <button aria-label="Hidden icons">${svg('<path d="M6 10.500l3-3 3 3" fill="none" stroke="#333" stroke-width="1.200"/>')}</button>
        <button aria-label="Cloud">${svg('<path d="M5 13a3 3 0 0 1 0-6 4.500 4.500 0 0 1 8-1" fill="none" stroke="#555" stroke-width="1.500"/><circle cx="11.500" cy="11.500" r="3.800" fill="#1679c9"/><path d="M11.500 9v1M11.500 11v3" stroke="#fff"/>', 19)}</button>
        <button aria-label="Microphone">${svg('<rect x="7" y="3" width="4" height="8" rx="2" fill="#b5c3d8" stroke="#667"/><path d="M5 9q0 4 4 4t4-4M9 13v3" fill="none" stroke="#667"/>')}</button>
        <button aria-label="Network">${svg('<path d="M12 4H4v8h8M8 12v3M5 15h6M14 5v10M12 5h4v3h-4z" fill="none" stroke="#444"/>', 16)}</button>
        <button aria-label="Volume">${svg('<path d="M2 7h2l4-3v10l-4-3H2zM10 7q1.500 2 0 4M12 5q3 4 0 8" fill="none" stroke="#555"/>', 15)}</button>
        <div class="clock"><div>2:40 AM</div><div>3/25/2026</div></div>
      </div>`;
  }
}
customElements.define('task-bar', TaskBar);
customElements.define('trading-window', TradingWindow);

class TradingDesktop extends HTMLElement {
  connectedCallback() {
    this.attachShadow({ mode: 'open' }).innerHTML = `
      <style>
        :host { position: relative; display: flex; flex-direction: column; height: 100vh; background: #252525; }
        .windows { flex: 1; min-height: 0; display: grid; grid-template-columns: 640fr 633fr; padding-right: 7px; }
        stream-chat { position: absolute; left: 36px; bottom: 36px; width: 285px; height: 285px; box-sizing: border-box; }
        .notice { position: absolute; right: 83px; bottom: 65px; width: 131px; white-space: nowrap; color: #8c8c8cb3; font: 10px/14px "Open Sans", sans-serif; pointer-events: none; }
        .notice strong { display: block; font-weight: 400; font-size: 13px; line-height: 16px; }
      </style>
      <div class="windows"><trading-window model="left"></trading-window><trading-window model="right"></trading-window></div>
      <task-bar></task-bar>
      <stream-chat></stream-chat>
      <div class="notice"><strong>Activate Windows</strong>Go to Settings to activate Windows.</div>`;
  }
}
customElements.define('trading-desktop', TradingDesktop);
</script>
</body>
</html>
